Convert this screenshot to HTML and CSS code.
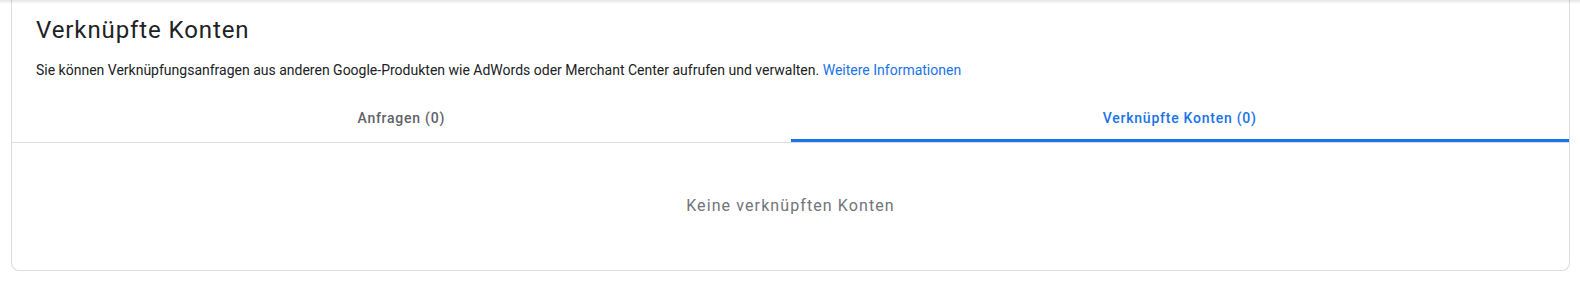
FILE: index.html
```html
<!DOCTYPE html>
<html lang="de">
<head>
  <meta charset="UTF-8">
  <meta name="viewport" content="width=device-width, initial-scale=1.0">
  <title>Verknüpfte Konten</title>
  <link rel="stylesheet" href="styles.css">
</head>
<body>
  <div class="card">
    <div class="card-header">
      <h2>Verknüpfte Konten</h2>
      <p class="intro">
        Sie können Verknüpfungsanfragen aus anderen Google-Produkten wie AdWords oder Merchant Center aufrufen und verwalten.
        <a href="#" class="learn-more">Weitere Informationen</a>
      </p>
    </div>

    <div class="tabs">
      <div class="tab">Anfragen (0)</div>
      <div class="tab active">Verknüpfte Konten (0)</div>
    </div>

    <div class="empty">Keine verknüpften Konten</div>
  </div>
</body>
</html>
```

FILE: styles.css
```css
body {
  margin: 0;
  padding: 0 10px 12px 11px;
  background: #fff;
  font-family: Roboto, Arial, sans-serif;
  color: #202124;
}
body::before {
  content: "";
  position: fixed;
  top: 0;
  left: 0;
  right: 0;
  height: 4px;
  background: linear-gradient(rgba(0, 0, 0, 0.1), rgba(0, 0, 0, 0));
}
.card {
  border: 1px solid #dadce0;
  border-top: none;
  border-radius: 0 0 8px 8px;
}
.card-header {
  padding: 14px 24px 0;
}
h2 {
  margin: 0;
  font-size: 24px;
  line-height: 32px;
  font-weight: 400;
  letter-spacing: 0.9px;
}
.intro {
  margin: 14px 0 14px;
  font-size: 14px;
  line-height: 20px;
}
.learn-more {
  color: #1a73e8;
  text-decoration: none;
}
.tabs {
  display: flex;
  border-bottom: 1px solid #dadce0;
}
.tab {
  flex: 1;
  height: 48px;
  box-sizing: border-box;
  display: flex;
  align-items: center;
  justify-content: center;
  font-size: 14px;
  font-weight: 500;
  letter-spacing: 0.75px;
  color: #5f6368;
}
.tab.active {
  color: #1a73e8;
  border-bottom: 3px solid #1a73e8;
  border-radius: 3px 3px 0 0;
  padding-top: 3px;
}
.empty {
  padding: 51px 0 52px;
  text-align: center;
  font-size: 16px;
  line-height: 24px;
  letter-spacing: 1.1px;
  color: #70757a;
}
```
